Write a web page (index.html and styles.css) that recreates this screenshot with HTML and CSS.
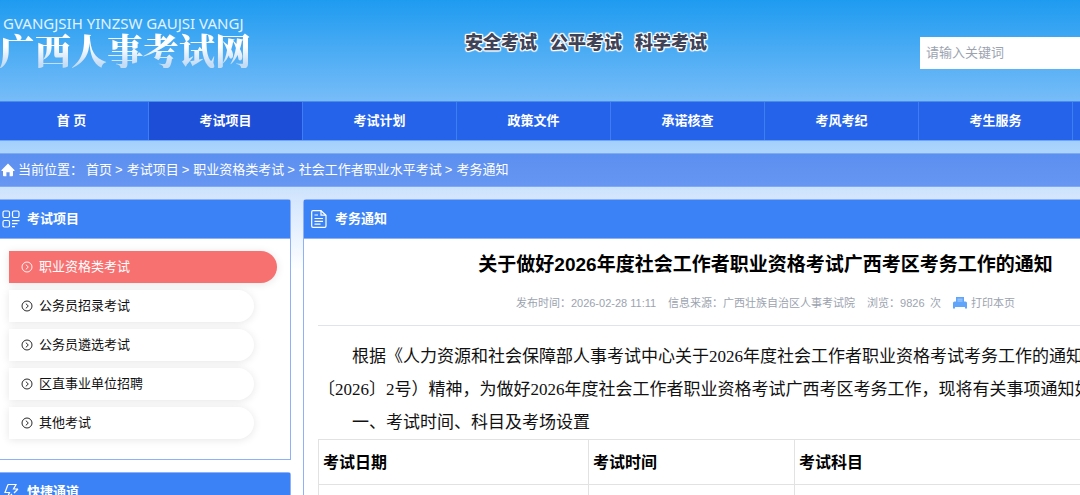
FILE: index.html
```html
<!DOCTYPE html>
<html lang="zh-CN">
<head>
<meta charset="utf-8">
<title>广西人事考试网</title>
<link rel="stylesheet" href="styles.css">
</head>
<body>
<svg class="sprite" aria-hidden="true">
  <symbol id="arrow" viewBox="0 0 12 12"><circle cx="6" cy="6" r="5"/><path d="M4.8 3.6 7.3 6 4.8 8.4"/></symbol>
</svg>
<div class="page">
  <header class="header">
    <div class="logo">
      <span class="logo-latin">GVANGJSIH YINZSW GAUJSI VANGJ</span>
      <span class="logo-name">广西人事考试网</span>
    </div>
    <div class="slogan"><span>安全考试</span><span>公平考试</span><span>科学考试</span></div>
    <form class="search"><input class="search-input" type="text" placeholder="请输入关键词" aria-label="请输入关键词"></form>
  </header>
  <nav class="nav">
    <a class="nav-item home" href="#">首 页</a>
    <a class="nav-item active" href="#">考试项目</a>
    <a class="nav-item" href="#">考试计划</a>
    <a class="nav-item" href="#">政策文件</a>
    <a class="nav-item" href="#">承诺核查</a>
    <a class="nav-item" href="#">考风考纪</a>
    <a class="nav-item" href="#">考生服务</a>
  </nav>
  <div class="crumbs">
    <svg class="crumb-icon" viewBox="0 0 14 14"><path fill="#fff" d="M7 .6 13.6 7.2q.3.8-.6.8H12v4.3q0 .9-.9.9H8.6V9.2H5.4v4H2.9Q2 13.200 2 12.300V8H1Q.1 8 .4 7.200Z"/></svg>
    <span class="crumb-label">当前位置：</span>
    <a href="#">首页</a><span class="sep">&gt;</span><a href="#">考试项目</a><span class="sep">&gt;</span><a href="#">职业资格类考试</a><span class="sep">&gt;</span><a href="#">社会工作者职业水平考试</a><span class="sep">&gt;</span><a href="#">考务通知</a>
  </div>
  <div class="columns">
    <aside class="sidebar">
      <section class="panel side-panel">
        <h2 class="panel-head">
          <svg class="head-icon" viewBox="0 0 18 18"><rect x="1" y="1" width="6.500" height="6.500" rx="1.500"/><rect x="10.500" y="1" width="6.500" height="6.500" rx="1.500"/><rect x="1" y="10.500" width="6.500" height="6.500" rx="1.500"/><path d="M10 10.600h7.500M10 13.600h5.500M10 16.600h3"/></svg>
          考试项目
        </h2>
        <ul class="menu">
          <li><a class="menu-item current" href="#"><svg class="arrow"><use href="#arrow"/></svg>职业资格类考试</a></li>
          <li><a class="menu-item" href="#"><svg class="arrow"><use href="#arrow"/></svg>公务员招录考试</a></li>
          <li><a class="menu-item" href="#"><svg class="arrow"><use href="#arrow"/></svg>公务员遴选考试</a></li>
          <li><a class="menu-item" href="#"><svg class="arrow"><use href="#arrow"/></svg>区直事业单位招聘</a></li>
          <li><a class="menu-item" href="#"><svg class="arrow"><use href="#arrow"/></svg>其他考试</a></li>
        </ul>
      </section>
      <section class="panel side-panel">
        <h2 class="panel-head">
          <svg class="head-icon" viewBox="0 0 18 18"><path d="M6 1.500h8L11.500 6H16M6 1.500 3 9.500h4.500L4.500 16.500 10 11M16 6l-4 4M11 12.500h5M10 15.500h3.500"/></svg>
          快捷通道
        </h2>
      </section>
    </aside>
    <main class="panel main-panel">
      <h2 class="panel-head">
        <svg class="head-icon" viewBox="0 0 18 18"><path d="M3 .7h8L16 5.200V16q0 1.300-1.300 1.300H3Q1.700 17.300 1.700 16V2Q1.700.7 3 .7Z"/><path d="M11 .7v4.500h5M4.500 5h3.500M4.500 8.500h8.500M4.500 11.300h8.500M4.500 14.100h6"/></svg>
        考务通知
      </h2>
      <article class="article">
        <h1 class="title">关于做好2026年度社会工作者职业资格考试广西考区考务工作的通知</h1>
        <div class="meta">
          <span>发布时间：2026-02-28 11:11</span>
          <span>信息来源：广西壮族自治区人事考试院</span>
          <span>浏览：9826&ensp;次</span>
          <a class="print" href="#"><svg class="print-icon" viewBox="0 0 14 12"><path fill="#60a5fa" d="M3 0h8v4.500h1.500Q14 4.500 14 6v5.500h-2V10H2v1.500H0V6Q0 4.500 1.500 4.500H3Z"/><path stroke="#c3dcfd" stroke-width=".8" d="M4.500 2.200h5M4.500 4h5"/></svg>打印本页</a>
        </div>
        <div class="body">
          <p class="indent">根据《人力资源和社会保障部人事考试中心关于2026年度社会工作者职业资格考试考务工作的通知<br>〔2026〕2号）精神，为做好2026年度社会工作者职业资格考试广西考区考务工作，现将有关事项通知如</p>
          <p class="indent">一、考试时间、科目及考场设置</p>
          <table class="schedule">
            <colgroup><col class="col-date"><col class="col-time"><col></colgroup>
            <thead><tr><th scope="col">考试日期</th><th scope="col">考试时间</th><th scope="col">考试科目</th></tr></thead>
            <tbody><tr><td></td><td></td><td></td></tr></tbody>
          </table>
        </div>
      </article>
    </main>
  </div>
</div>
</body>
</html>
```
FILE: styles.css
```css
* { box-sizing: border-box; }
body {
  margin: 0;
  height: 100vh;
  overflow: hidden;
  font: 13px/20px "Liberation Sans", "Noto Sans CJK SC", sans-serif;
  color: #111;
  background: #fff linear-gradient(#1e9bf0 0, #76bcf8 100px, #acd4fc 150px, #d2e5fd 195px, #fff 270px) no-repeat;
}
a { color: inherit; text-decoration: none; }
h1, h2, p, ul { margin: 0; padding: 0; }
ul { list-style: none; }
.sprite { display: none; }
/* The site keeps a desktop width and runs off the right on narrow windows */
.page { min-width: 1228px; }

.header { display: flex; height: 101px; }
.logo { flex: 0 0 465px; padding: 14px 0 0 3px; color: #fff; }
.logo-latin { display: block; font: 15px/18px "Noto Sans", sans-serif; color: #e2f2ff; }
.logo-name {
  display: inline-block;
  margin-left: -4px;
  font: 900 36px/36px "Noto Serif CJK SC", "Noto Sans CJK SC", serif;
  color: transparent;
  background: linear-gradient(#fff 40%, #c5dcf5 90%);
  -webkit-background-clip: text;
  background-clip: text;
}
.slogan {
  flex: 0 0 455px;
  display: flex;
  gap: 13px;
  padding-top: 28px;
  font: 900 18px/26px "Noto Sans CJK SC", sans-serif;
  color: #3f4358;
  text-shadow: 1px 0 1px #fff, -1px 0 1px #fff, 0 1px 1px #fff, 0 -1px 1px #fff, 1px 1px 1px #fff, -1px -1px 1px #fff, 1px -1px 1px #fff, -1px 1px 1px #fff;
}
.search { flex: 1; padding-top: 37px; }
.search-input { width: 100%; height: 32px; padding: 0 6px 2px; border: 0; font: inherit; background: #fff; }
.search-input::placeholder { color: #9ca3af; }

.nav {
  display: flex;
  height: 40px;
  background: #2563eb;
  border-top: 1px solid #4a8bf0;
  border-bottom: 1px solid #6fa5f7;
}
.nav-item {
  flex: 0 0 154px;
  border-right: 1px solid #3f7df2;
  color: #fff;
  font-weight: bold;
  line-height: 38px;
  text-align: center;
}
.nav-item.home { flex-basis: 149px; padding-right: 5px; }
.nav-item.active { background: #1d4ed8; }

.crumbs {
  display: flex;
  align-items: center;
  height: 34px;
  margin: 12px 0;
  padding-left: 1px;
  color: #fff;
  background: linear-gradient(#5b8ff0, #6796f2);
  border: solid #7daaf6;
  border-width: 1px 0;
}
.crumb-icon { width: 14px; height: 14px; margin-right: 3px; }
.crumb-label { margin-right: 3px; }
.sep { margin: 0 4px 0 3px; }

.columns { display: flex; gap: 12px; align-items: flex-start; }
.sidebar { flex: 0 0 291px; display: flex; flex-direction: column; gap: 12px; }
.panel { background: #fff; border: 1px solid #8fb1fa; border-radius: 3px 3px 0 0; }
.side-panel { border-left: 0; border-radius: 0 3px 0 0; }
.panel-head {
  display: flex;
  align-items: center;
  gap: 7px;
  height: 39px;
  padding-left: 2px;
  font-size: 13px;
  color: #fff;
  background: #3b82f6;
  border-bottom: 1px solid #8fb1fa;
}
.head-icon { width: 18px; height: 18px; fill: none; stroke: #fff; stroke-width: 1.200; }
.menu { display: grid; gap: 7px; padding: 12px 13px 20px 9px; }
.menu-item {
  display: flex;
  align-items: center;
  gap: 6px;
  height: 32px;
  margin-right: 23px;
  padding-left: 12px;
  border-radius: 0 16px 16px 0;
  background: #fff;
  box-shadow: 0 1px 8px rgba(0, 0, 0, .1);
}
.menu-item.current { margin-right: 0; color: #fff; background: #f87171; }
.arrow { width: 12px; height: 12px; fill: none; stroke: currentColor; stroke-width: .9; }

.main-panel { flex: 1; min-width: 0; }
.main-panel > .panel-head { padding-left: 6px; }
.article { padding: 10px 14px; }
.title { font-size: 19px; line-height: 32px; color: #000; text-align: center; }
.meta {
  display: flex;
  justify-content: center;
  gap: 12px;
  padding: 12px 0;
  border-bottom: 1px solid #e0e4ea;
  font-size: 11px;
  color: #9ca3af;
}
.print { display: flex; align-items: center; gap: 4px; }
.print-icon { width: 14px; height: 12px; }
.body { padding-top: 14px; font: 17px/33px "Liberation Serif", "Noto Sans CJK SC", serif; color: #111; white-space: nowrap; }
.indent { text-indent: 2em; }
.schedule { width: 100%; table-layout: fixed; border-collapse: collapse; font-size: 16px; color: #000; }
.col-date { width: 270px; }
.col-time { width: 206px; }
.schedule th, .schedule td { height: 45px; padding: 0 4px; border: 1px solid #e2e2e2; text-align: left; }
```
